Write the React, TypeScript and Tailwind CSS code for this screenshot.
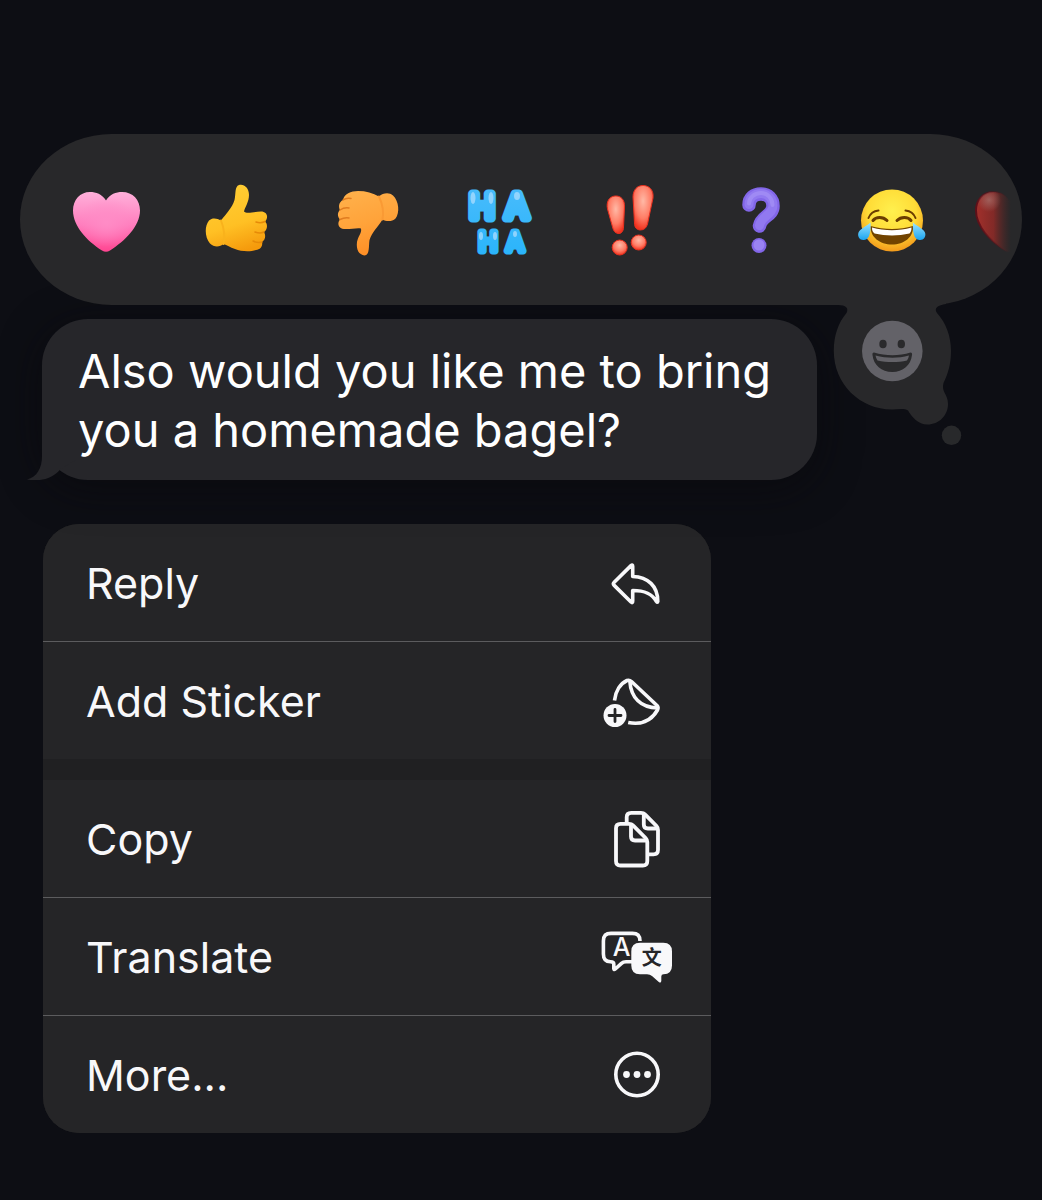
import React from 'react';

const HEART =
  'M40 20.5 C44 14 50 12 56 12 C67 12 74 20 74 30.5 C74 46 59 61 44 70.5 Q40 73 36 70.5 C21 61 7 46 7 30.5 C7 20 14 12 24 12 C30 12 36 14 40 20.5Z';

const PinkHeart = () => (
  <svg viewBox="0 0 80 80" className="size-20" aria-hidden="true">
    <defs>
      <linearGradient id="pinkBase" x1="0" y1="0" x2="0" y2="1">
        <stop offset="0" stopColor="#ffb0da" />
        <stop offset="0.55" stopColor="#ff7dbd" />
        <stop offset="1" stopColor="#ff4591" />
      </linearGradient>
      <radialGradient id="pinkGlow" cx="0.5" cy="0.5" r="0.42">
        <stop offset="0" stopColor="#ff8cc6" />
        <stop offset="1" stopColor="#ff8cc6" stopOpacity="0" />
      </radialGradient>
    </defs>
    <path d={HEART} fill="url(#pinkBase)" />
    <path d={HEART} fill="url(#pinkGlow)" />
  </svg>
);

const ThumbUp = () => (
  <svg viewBox="0 0 80 80" className="size-20" aria-hidden="true">
    <defs>
      <linearGradient id="thumbUp" x1="0.3" y1="0" x2="0.6" y2="1">
        <stop offset="0" stopColor="#ffce35" />
        <stop offset="0.6" stopColor="#ffc024" />
        <stop offset="1" stopColor="#f59a0c" />
      </linearGradient>
    </defs>
    <path
      d="M42 5 C47 3.5 52 8 52 15 C52 22 48 27 47 31.5 C49 34 57 32 64 31.5 C70 31.5 72 37 68 41.5 C71 44 70.5 50 67 52 C69 55 68.5 60 65 62 C66 66 63.5 69.5 59 70 C53 72 44 71.5 38 69 C33 67.5 30 65 26.5 64 C23 67 17 67.5 13 63.5 C7.5 57 7.5 46 12 40.5 C15 37.5 20 38 24 40.5 C29 34 35 28 37.5 20 C39 14 37.5 6.5 42 5Z"
      fill="url(#thumbUp)"
    />
    <path
      d="M68 41.5 C65 43 62 43 59 42 M67 52 C64 53.5 61 53 58 52 M65 62 C62 63 59 62.5 56 61"
      fill="none"
      stroke="#e68a08"
      strokeWidth="1.5"
      strokeLinecap="round"
    />
    <path d="M24 40.5 C27 48 28 57 26.5 64" fill="none" stroke="#f9b21c" strokeWidth="2" strokeLinecap="round" />
  </svg>
);

const ThumbDown = () => (
  <svg viewBox="0 0 80 80" className="size-20" aria-hidden="true">
    <defs>
      <linearGradient id="thumbDown" x1="0.3" y1="0" x2="0.6" y2="1">
        <stop offset="0" stopColor="#ffb04a" />
        <stop offset="0.5" stopColor="#ffa33a" />
        <stop offset="1" stopColor="#ff8d24" />
      </linearGradient>
    </defs>
    <path
      d="M15 20 C16 14 23 11 30 11 C38 11 45 13 51 16.5 C55 13 61 12 65 15.5 C71 21 72 33 67.5 38.5 C64 42 58 41.5 54.5 39.5 C50 47 44 52 41.5 60 C40.5 66 42 75 36.5 75.5 C31 74.5 28 70 29 62 C30 56 34 53 33 48.5 C29 47.5 22 49.5 16 49 C11 49 8.5 43.5 12 39.5 C9.5 37 9 32.5 12 30 C10 26.5 11 22 15 20Z"
      fill="url(#thumbDown)"
    />
    <path
      d="M15 20 C17 18.5 20 18 23 18.5 M12 30 C15 28 18 27.5 21 28 M12 39.5 C15 38 18 37.5 21 38"
      fill="none"
      stroke="#e07c20"
      strokeWidth="1.5"
      strokeLinecap="round"
    />
    <path d="M51 16.5 C54 23 56 32 54.5 39.5" fill="none" stroke="#fa9a34" strokeWidth="2" strokeLinecap="round" />
  </svg>
);

const HaHa = () => (
  <svg viewBox="0 0 80 80" className="size-20 overflow-visible" aria-hidden="true">
    <defs>
      <linearGradient id="haha" x1="0" y1="0" x2="0" y2="80" gradientUnits="userSpaceOnUse">
        <stop offset="0" stopColor="#4cbcfb" />
        <stop offset="1" stopColor="#28b4fb" />
      </linearGradient>
    </defs>
    <g
      className="font-['Inter']"
      textAnchor="middle"
      fill="url(#haha)"
      stroke="url(#haha)"
      strokeLinejoin="round"
    >
      <text x="23" y="38" fontSize="33" strokeWidth="9">H</text>
      <text x="58" y="38" fontSize="33" strokeWidth="9">A</text>
      <text x="29" y="71" fontSize="25" strokeWidth="7">H</text>
      <text x="56" y="71" fontSize="25" strokeWidth="7">A</text>
    </g>
    <g fill="#b4e0ff" opacity="0.7">
      <ellipse cx="14" cy="18" rx="2.5" ry="6" />
      <ellipse cx="32" cy="18" rx="2.5" ry="6" />
      <ellipse cx="58" cy="16" rx="3" ry="4" />
      <ellipse cx="22" cy="56" rx="2" ry="4" />
      <ellipse cx="36" cy="56" rx="2" ry="4" />
      <ellipse cx="56" cy="54" rx="2" ry="3" />
    </g>
  </svg>
);

const Emphasis = () => (
  <svg viewBox="0 0 80 80" className="size-20" aria-hidden="true">
    <defs>
      <radialGradient id="bang" cx="0.5" cy="0.35" r="0.65">
        <stop offset="0" stopColor="#ffb9a6" />
        <stop offset="0.6" stopColor="#ff7d66" />
        <stop offset="1" stopColor="#f2331f" />
      </radialGradient>
    </defs>
    <g fill="url(#bang)" stroke="#e8301f" strokeWidth="1">
      <path d="M25 16 C31 15.5 35 20 34.5 27 L33.5 47 C33.5 52 30.5 54 28 53.5 C25 53 23.5 51 22.5 47 L17.5 29 C16 22 19 16.5 25 16Z" />
      <path d="M53 5.5 C59 5.5 64 10 63 18 L57.5 44 C56.5 48 54 50 50 50 C46 49.5 44.5 47 44.5 43 L43 17 C43 10 47 5.5 53 5.5Z" />
      <circle cx="29.7" cy="67.5" r="7.5" />
      <circle cx="48.7" cy="62.5" r="7.5" />
    </g>
  </svg>
);

const Question = () => (
  <svg viewBox="0 0 80 80" className="size-20" aria-hidden="true">
    <g fill="none" strokeLinecap="round">
      <path d="M28 25 C28 18 33 14 40 14 C47 14 52 19 52 26 C52 36 40 36 38.5 46" stroke="#8266e8" strokeWidth="13.5" />
      <path d="M28 24.5 C28 18 33 13.5 40 13.5 C47 13.5 52 19 52 25.5 C52 35 40 36 38.5 45.5" stroke="#9179f0" strokeWidth="9" />
      <path d="M28 23.5 C28 18 33 13 40 13 C47 13 51.5 19 51.5 25" stroke="#9f8af4" strokeWidth="4" />
    </g>
    <circle cx="38" cy="65.5" r="7.5" fill="#8266e8" />
    <circle cx="38" cy="65" r="5.5" fill="#9a83f3" />
  </svg>
);

const TearsOfJoy = () => (
  <svg viewBox="0 0 80 80" className="size-20" aria-hidden="true">
    <defs>
      <radialGradient id="joyFace" cx="0.5" cy="0.35" r="0.65">
        <stop offset="0" stopColor="#fff04e" />
        <stop offset="0.6" stopColor="#ffdc37" />
        <stop offset="1" stopColor="#f39a1b" />
      </radialGradient>
      <linearGradient id="tear" x1="0" y1="0" x2="0" y2="1">
        <stop offset="0" stopColor="#9de4ff" />
        <stop offset="1" stopColor="#1aa4f0" />
      </linearGradient>
    </defs>
    <circle cx="40" cy="40.5" r="31" fill="url(#joyFace)" />
    <path d="M18.5 46 C32 50 48 50 61 46 C62 57 52 64.5 40 64.5 C28 64.5 18 57 18.5 46Z" fill="#714300" />
    <path d="M20 47.5 C33 51 47 51 59.5 47.5 C59.5 50.5 59 52 57.5 53.5 C46 56 34 56 22.5 53.5 C20.5 52 20 50.5 20 47.5Z" fill="#fff" />
    <g fill="none" stroke="#6b3d00" strokeLinecap="round">
      <path d="M21 40.5 C24 36.5 31 36.5 35 40.5 M45 40.5 C49 36.5 56 36.5 59 40.5" strokeWidth="3" />
      <path d="M16.5 38 C18 34 22 31 26.5 30.5 M53.5 30.5 C58 31 62 34 63.5 38" strokeWidth="2" />
    </g>
    <path d="M18.5 42.5 C19 50 18 60 12 60 C8 60.5 5 56.5 6.5 52.5 C8.5 48.5 14 46.5 18.5 42.5Z" fill="url(#tear)" />
    <path d="M61 42.5 C60.5 50 61.5 60 67.5 60 C71.5 60.5 74.5 56.5 73 52.5 C71 48.5 65.5 46.5 61 42.5Z" fill="url(#tear)" />
  </svg>
);

const FadingHeart = () => (
  <svg viewBox="0 0 80 80" className="size-20" aria-hidden="true">
    <defs>
      <linearGradient id="fadeOut" x1="7" x2="42" y1="0" y2="0" gradientUnits="userSpaceOnUse">
        <stop offset="0" stopColor="#a3302b" />
        <stop offset="0.5" stopColor="#8c2a27" stopOpacity="0.9" />
        <stop offset="1" stopColor="#5a2624" stopOpacity="0" />
      </linearGradient>
      <linearGradient id="fadeEdge" x1="7" x2="40" y1="0" y2="0" gradientUnits="userSpaceOnUse">
        <stop offset="0" stopColor="#5e0f18" />
        <stop offset="1" stopColor="#5e0f18" stopOpacity="0" />
      </linearGradient>
      <radialGradient id="fadeShine" cx="20" cy="20" r="12" gradientUnits="userSpaceOnUse">
        <stop offset="0" stopColor="#a8746f" stopOpacity="0.7" />
        <stop offset="1" stopColor="#a8746f" stopOpacity="0" />
      </radialGradient>
    </defs>
    <path d={HEART} fill="url(#fadeOut)" stroke="url(#fadeEdge)" strokeWidth="2" />
    <path d={HEART} fill="url(#fadeShine)" />
  </svg>
);

const reactions = [
  { name: 'Heart', Icon: PinkHeart },
  { name: 'Thumbs up', Icon: ThumbUp },
  { name: 'Thumbs down', Icon: ThumbDown },
  { name: 'Ha ha', Icon: HaHa },
  { name: 'Emphasize', Icon: Emphasis },
  { name: 'Question', Icon: Question },
  { name: 'Tears of joy', Icon: TearsOfJoy },
];

const ThoughtBubble = () => (
  <svg viewBox="0 0 160 170" className="h-[170px] w-40" aria-hidden="true">
    <path
      d="M18 15 C26 15 29 18 26.5 23 C18 33 13.8 46 13.8 61 C13.8 94 40 119.5 72 119.5 C78 119.5 84 118 88 120.5 C92 127 98 134.5 107.5 134.5 C119 134.5 128 125.5 128 114 C128 104 121 102 123.5 93 C128 84 131 74 131 61 C131 46 126 33 117 23 C113.5 18 118 15 126 14 L126 12 L18 12Z"
      fill="#28282a"
    />
    <circle cx="131.5" cy="145.3" r="9.7" fill="#28292b" />
    <circle cx="72.3" cy="61" r="30.3" fill="#636268" />
    <ellipse cx="63" cy="54" rx="3.7" ry="4.3" fill="#2a2a2c" />
    <ellipse cx="81.3" cy="54" rx="3.7" ry="4.3" fill="#2a2a2c" />
    <path d="M54 62.5 C66 66 79 66 90.5 62.5 Q92.5 62.5 92 65 C91 75 83 82 72.3 82 C61.5 82 53.5 75 52.5 65 Q52 62.5 54 62.5Z" fill="#2a2a2c" />
    <path d="M55.5 65.5 C67 68.5 78 68.5 89 65.5 Q88.5 68.5 87 70.5 C78 72.5 67 72.5 57.5 70.5 Q56 68.5 55.5 65.5Z" fill="#636268" />
  </svg>
);

const ReplyIcon = () => (
  <path
    d="M14.2 35.2 L31 18.6 Q32.7 17.2 32.7 19.5 V29.5 C48 30 57.8 39 57.8 54.5 Q57.5 56 56.5 54.5 C52 46.5 45 43.5 32.7 43.5 V54 Q32.7 56.5 31 55 L14.2 38.4 Q12.6 36.8 14.2 35.2Z"
    fill="none"
    stroke="currentColor"
    strokeWidth="3.6"
    strokeLinejoin="round"
  />
);

const StickerIcon = () => (
  <>
    <g fill="none" stroke="currentColor" strokeWidth="3.6" strokeLinejoin="round">
      <path d="M14.5 35.5 C15.5 26 20.5 18.5 27 15.5 Q29.5 14.8 31.5 16.5 L57 40.5 Q58.8 42.5 57.5 45 C51 56.5 40 60 28.2 57.5" />
      <path d="M29.8 16 C31 33 41 42.5 57.5 43" />
    </g>
    <circle cx="15" cy="50.5" r="11.5" fill="currentColor" />
    <path d="M15 44.5 V56.5 M9 50.5 H21" stroke="#252527" strokeWidth="2.8" strokeLinecap="round" />
  </>
);

const CopyIcon = () => (
  <g fill="none" stroke="currentColor" strokeWidth="3.8" strokeLinejoin="round">
    <path d="M26.7 20 V14.3 Q26.7 9.8 31.2 9.8 H41 Q43.5 9.8 45 11.4 L56.5 23 Q58 24.5 58 27 V46.8 Q58 51.3 53.5 51.3 H48.5" />
    <path d="M43.8 10.5 V21.5 Q43.8 25.5 47.8 25.5 H57.5" />
    <path d="M20.5 20.8 H29 Q31.5 20.8 33 22.4 L45.6 35 Q47.3 36.7 47.3 39 V58 Q47.3 62.5 42.8 62.5 H20.5 Q16 62.5 16 58 V25.3 Q16 20.8 20.5 20.8Z" />
    <path d="M31 21.5 V33.5 Q31 37.5 35 37.5 H46.8" />
  </g>
);

const TranslateIcon = () => (
  <>
    <path
      d="M40 20 Q40 12.4 32.4 12.4 H11 Q3.4 12.4 3.4 20 V33 Q3.4 40.7 10.5 40.7 Q13.8 40.7 13.8 43 V47.5 Q13.8 49.3 15.3 48 L21.5 42.3 Q23.2 40.7 26 40.7 H32"
      fill="none"
      stroke="currentColor"
      strokeWidth="3.6"
      strokeLinejoin="round"
    />
    <text x="21.7" y="35" textAnchor="middle" fontSize="25" fill="currentColor" className="font-['Inter'] font-medium">
      A
    </text>
    <path
      d="M40 21.7 H63.3 Q72 21.7 72 30.4 V44.6 Q72 53.3 63.5 53.3 Q61.3 53.3 61.3 55.5 V60 Q61 62.5 58.8 61 L52 55 Q50 53.3 47 53.3 H40 Q31.3 53.3 31.3 44.6 V30.4 Q31.3 21.7 40 21.7Z"
      fill="currentColor"
    />
    <text x="51.7" y="44" textAnchor="middle" fontSize="20" fill="#252527" className="font-['Noto_Sans_CJK_SC',sans-serif] font-bold">
      文
    </text>
  </>
);

const MoreIcon = () => (
  <>
    <circle cx="37" cy="35.5" r="21.2" fill="none" stroke="currentColor" strokeWidth="3.6" />
    <circle cx="26.5" cy="35.5" r="3.4" fill="currentColor" />
    <circle cx="37" cy="35.5" r="3.4" fill="currentColor" />
    <circle cx="47.5" cy="35.5" r="3.4" fill="currentColor" />
  </>
);

interface MenuItemProps {
  label: string;
  children: React.ReactNode;
}

const MenuItem: React.FC<MenuItemProps> = ({ label, children }) => (
  <li>
    <button type="button" className="flex h-[117px] w-full items-center justify-between bg-[#252527] pl-[43px] pr-[39px] text-left">
      <span className="text-[43px] leading-[56px]">{label}</span>
      <svg viewBox="0 0 72 72" className="size-[72px] shrink-0" aria-hidden="true">
        {children}
      </svg>
    </button>
  </li>
);

const App: React.FC = () => {
  return (
    <main className="min-h-screen bg-[#0d0e14] pt-[134px] pb-16 font-['Inter',sans-serif] text-[#f8f8fa]">
      <div className="relative z-10 mx-5">
        <div className="flex h-[171px] items-center overflow-hidden rounded-[92px/86px] bg-[#28282a] pl-5">
          {reactions.map(({ name, Icon }) => (
            <button key={name} type="button" aria-label={name} className="flex w-[131px] shrink-0 justify-center">
              <Icon />
            </button>
          ))}
          <button type="button" aria-label="Red heart" className="flex w-[104px] shrink-0 justify-center">
            <FadingHeart />
          </button>
        </div>
        <button type="button" aria-label="More emoji" className="absolute top-[156px] right-[42px]">
          <ThoughtBubble />
        </button>
      </div>

      <div className="relative mt-[14px] ml-[42px] w-fit max-w-[775px] rounded-[46px] bg-[#26262a] px-9 pt-[22px] pb-[21px] shadow-[0_8px_40px_rgba(8,9,12,0.6)]">
        <p className="text-[47px] leading-[59px] text-white">Also would you like me to bring you a homemade bagel?</p>
        <svg viewBox="0 0 50 60" className="absolute -left-4 bottom-0 h-[60px] w-[50px]" aria-hidden="true">
          <path d="M16 0 V36 C16 48 11 57 1 59.5 C12 61.5 26 60 34.5 49 L50 40 V0Z" fill="#26262a" />
        </svg>
      </div>

      <div className="mt-11 ml-[43px] w-full max-w-[668px] overflow-hidden rounded-[36px] bg-[#202022]">
        <ul className="divide-y divide-[#5c5c5e]">
          <MenuItem label="Reply">
            <ReplyIcon />
          </MenuItem>
          <MenuItem label="Add Sticker">
            <StickerIcon />
          </MenuItem>
        </ul>
        <ul className="mt-[21px] divide-y divide-[#5c5c5e]">
          <MenuItem label="Copy">
            <CopyIcon />
          </MenuItem>
          <MenuItem label="Translate">
            <TranslateIcon />
          </MenuItem>
          <MenuItem label="More...">
            <MoreIcon />
          </MenuItem>
        </ul>
      </div>
    </main>
  );
};

export default App;
